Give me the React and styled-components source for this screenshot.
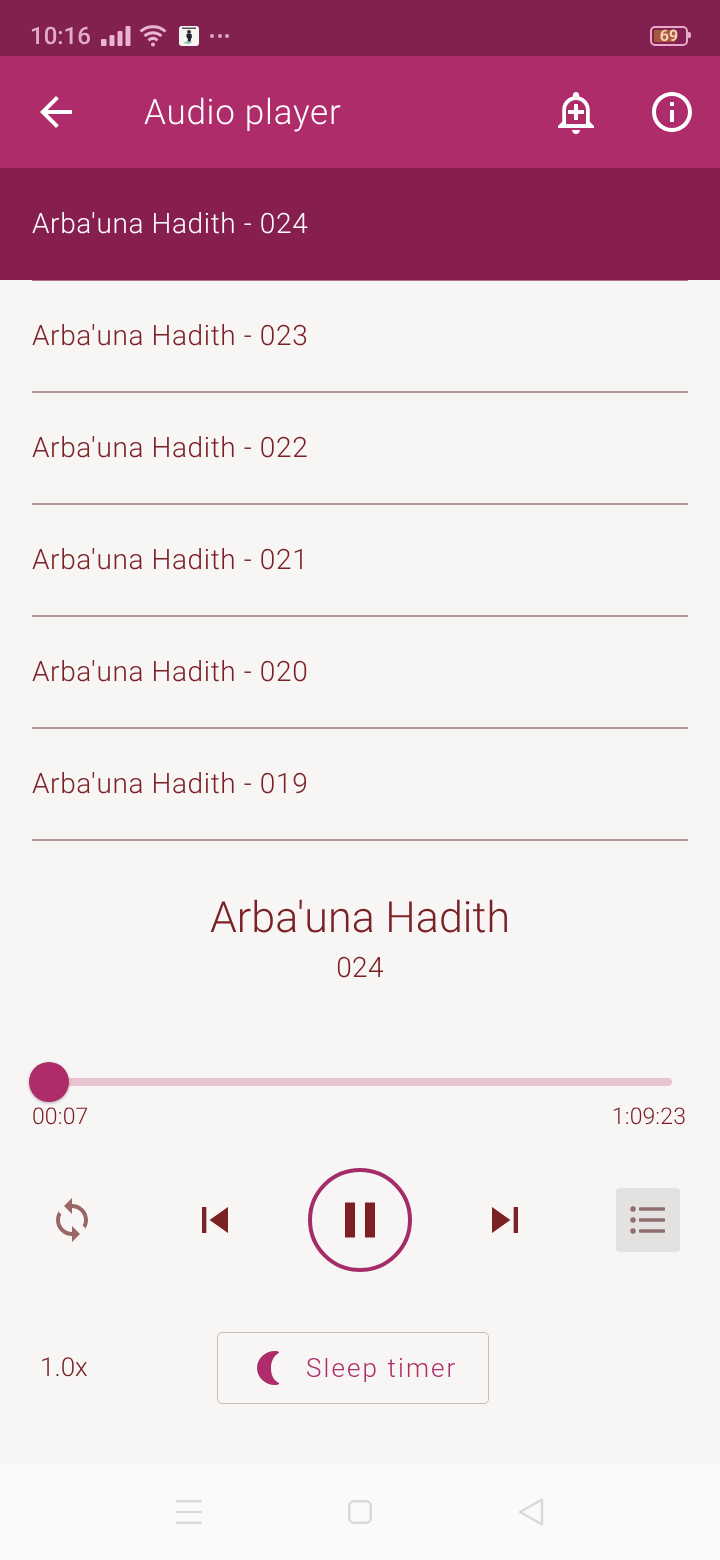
import React from 'react';
import styled, { createGlobalStyle, css } from 'styled-components';

const GlobalStyle = createGlobalStyle`
  html, body { margin: 0; padding: 0; background: #f8f6f5; }
  * { box-sizing: border-box; }
  body { font-family: Roboto, "Liberation Sans", sans-serif; text-rendering: geometricPrecision; }
`;

// own layer, so the text is antialiased in grey as on the phone
const softText = css`
  will-change: opacity;
`;

const Screen = styled.div`
  width: 720px;
  height: 1560px;
  display: flex;
  flex-direction: column;
  background: #f8f6f5;
  overflow: hidden;
`;

//#region status bar
const StatusBar = styled.div`
  height: 56px;
  flex: none;
  display: flex;
  align-items: center;
  padding: 15px 32px 0 30px;
  background: #82214f;
  color: #e8b4d0;
`;
const Clock = styled.span`
  ${softText}
  font-size: 24px;
  font-weight: 500;
  line-height: 1;
  width: 61px;
  opacity: 0.95;
`;
const Dots = styled.span`
  margin-left: 11px;
  display: flex;
  gap: 3.5px;
  i { width: 4px; height: 4px; border-radius: 50%; background: #dba6c4; display: block; }
`;
const Battery = styled.div`
  margin-left: auto;
  position: relative;
  width: 38px;
  height: 20px;
  border: 2px solid #e8a8cc;
  border-radius: 5px;
  background: linear-gradient(to right, #a8583f 0 69%, transparent 69%);
  background-clip: content-box;
  padding: 2px;
  &::after {
    content: '';
    position: absolute;
    right: -5px;
    top: 4px;
    width: 3px;
    height: 6px;
    border-radius: 0 2px 2px 0;
    background: #e8a8cc;
  }
`;
const BatteryLevel = styled.span`
  ${softText}
  display: flex;
  height: 100%;
  align-items: center;
  justify-content: center;
  font-size: 16px;
  font-weight: 700;
  color: #f6d3b4;
`;
//#endregion

//#region app bar
const AppBar = styled.header`
  height: 112px;
  flex: none;
  display: flex;
  align-items: center;
  padding: 0 24px 0 32px;
  background: #ae2c6a;
  color: #fff;
`;
const Title = styled.h1`
  ${softText}
  margin: 0 0 0 64px;
  font-size: 35px;
  font-weight: 300;
  letter-spacing: 0.75px;
  color: #fff;
  flex: 1;
`;
const BarAction = styled.button`
  width: 48px;
  height: 48px;
  padding: 0;
  border: 0;
  background: none;
  color: #fff;
  display: flex;
  align-items: center;
  justify-content: center;
  margin-left: ${({ $gap }) => $gap || 0}px;
`;
//#endregion

//#region track list
const TrackList = styled.ul`
  list-style: none;
  margin: 0;
  padding: 0;
  flex: none;
`;
const Track = styled.li`
  height: 112px;
  padding: 0 32px;
  background: ${({ $active }) => ($active ? '#861f50' : 'transparent')};
`;
const TrackLabel = styled.div`
  ${softText}
  height: 112px;
  padding-bottom: 2px;
  display: flex;
  align-items: center;
  font-size: 28px;
  font-weight: 300;
  letter-spacing: 0.62px;
  color: ${({ $active }) => ($active ? '#fff' : '#7b2126')};
  box-shadow: ${({ $active }) =>
    $active ? '0 1px 0 #b0718a' : 'inset 0 -1px 0 #b29593, 0 1px 0 #b29593'};
`;
//#endregion

//#region now playing
const NowPlaying = styled.div`
  ${softText}
  padding-top: 52px;
  text-align: center;
  color: #7b2126;
  font-weight: 300;
`;
const AlbumName = styled.div`
  font-size: 43px;
  line-height: 52px;
  letter-spacing: 0.05px;
`;
const Episode = styled.div`
  font-size: 28px;
  line-height: 34px;
  margin-top: 7px;
  letter-spacing: 0.3px;
`;
const Seek = styled.div`
  margin-top: 93px;
  padding: 0 48px 0 29px;
`;
const Rail = styled.div`
  position: relative;
  height: 8px;
  border-radius: 0 4px 4px 0;
  background: #e8c3d2;
  margin-left: 2px;
`;
const Thumb = styled.div`
  position: absolute;
  left: -2px;
  top: -16px;
  width: 40px;
  height: 40px;
  border-radius: 50%;
  background: #ae2c6a;
  box-shadow: 0 1px 3px rgba(0, 0, 0, 0.3);
`;
const Times = styled.div`
  ${softText}
  display: flex;
  justify-content: space-between;
  padding: 0 34px 0 32px;
  margin-top: 17px;
  font-size: 23px;
  line-height: 28px;
  font-weight: 300;
  letter-spacing: 0.1px;
  color: #7b2126;
`;
const Controls = styled.div`
  margin-top: 37px;
  padding: 0 40px;
  height: 104px;
  display: flex;
  align-items: center;
  justify-content: space-between;
`;
const Transport = styled.div`
  display: flex;
  align-items: center;
  gap: 67px;
`;
const IconButton = styled.button`
  width: ${({ $size }) => $size}px;
  height: ${({ $size }) => $size}px;
  padding: 0;
  border: 0;
  background: ${({ $on }) => ($on ? '#e3e2e1' : 'none')};
  border-radius: 4px;
  color: ${({ $muted }) => ($muted ? '#9a6666' : '#7b2126')};
  display: flex;
  align-items: center;
  justify-content: center;
`;
const PauseButton = styled.button`
  width: 104px;
  height: 104px;
  padding: 0;
  border: 4px solid #a42c68;
  border-radius: 50%;
  background: none;
  color: #7b2126;
  display: flex;
  align-items: center;
  justify-content: center;
`;
const BottomRow = styled.div`
  margin-top: 60px;
  padding-left: 40px;
  display: grid;
  grid-template-columns: 177px 272px;
  align-items: center;
`;
const Speed = styled.span`
  ${softText}
  font-size: 26px;
  font-weight: 300;
  color: #7b2126;
`;
const SleepButton = styled.button`
  height: 72px;
  border: 1px solid #ccb8ba;
  border-radius: 5px;
  background: none;
  display: flex;
  align-items: center;
  padding: 0 0 0 39px;
  gap: 25px;
`;
const SleepLabel = styled.span`
  ${softText}
  font-family: Roboto, "Liberation Sans", sans-serif;
  font-size: 26px;
  font-weight: 300;
  letter-spacing: 2.1px;
  color: #ae2c6a;
`;
//#endregion

//#region nav bar
const NavBar = styled.nav`
  margin-top: auto;
  height: 96px;
  flex: none;
  background: #fafafa;
  display: flex;
  align-items: center;
  justify-content: center;
  gap: 146.5px;
  color: #d9d9d9;
`;
//#endregion

const Svg = ({ size = 24, children }) => (
  <svg width={size} height={size} viewBox="0 0 24 24" fill="currentColor">{children}</svg>
);

const SignalIcon = () => (
  <svg width="30" height="22" viewBox="0 0 30 22" fill="#e8b4d0" style={{ marginLeft: 10 }}>
    <rect x="0" y="14" width="5.500" height="7" rx="1" />
    <rect x="8.500" y="10" width="5" height="11" rx="1" />
    <rect x="16.500" y="6" width="5" height="15" rx="1" />
    <rect x="24.500" y="1" width="5" height="20" rx="1" />
  </svg>
);

const WifiIcon = () => (
  <svg width="28" height="23" viewBox="0 0 28 23" fill="none" stroke="#e8b4d0" strokeWidth="3" style={{ marginLeft: 8 }}>
    <path d="M1.500 7.500C8.500 1 19.500 1 26.500 7.500" />
    <path d="M5.500 12C10.500 7.500 17.500 7.500 22.500 12" />
    <path d="M9.500 16.300C12.500 13.800 15.500 13.800 18.500 16.300" />
    <circle cx="14" cy="20.500" r="2" fill="#e8b4d0" stroke="none" />
  </svg>
);

const AppThumb = () => (
  <svg width="20" height="20" viewBox="0 0 20 20" style={{ marginLeft: 12 }}>
    <rect width="20" height="20" rx="3" fill="#f7f7f2" />
    <rect x="3" y="1.500" width="14" height="1.500" fill="#555" />
    <circle cx="10" cy="6" r="2" fill="#333" />
    <path d="M7.500 8h5l.5 3-1 2-.5 3h-3l.5-3-1.500-2z" fill="#223" />
    <path d="M4 17l5-2 4 1-3 2z" fill="#8fbdb4" />
  </svg>
);

const BackIcon = () => (
  <Svg size={48}><path d="M20 11H7.830l5.590-5.590L12 4l-8 8 8 8 1.410-1.410L7.830 13H20v-2z" /></Svg>
);

const BellIcon = () => (
  <Svg size={48}>
    <path fillRule="evenodd" d="M10.010 21.010c0 1.100.890 1.990 1.990 1.990s1.990-.890 1.990-1.990h-3.980zM18.880 16.820V11c0-3.250-2.250-5.970-5.290-6.690v-.720C13.590 2.710 12.880 2 12 2s-1.590.710-1.590 1.590v.720C7.370 5.030 5.120 7.750 5.120 11v5.820L3 18.940V20h18v-1.060l-2.120-2.120zM17 18H7v-7c0-2.760 2.240-5 5-5s5 2.240 5 5v7z" />
    <path d="M16 13.010h-3v3h-2v-3H8V11h3V8h2v3h3v2.010z" />
  </Svg>
);

const InfoIcon = () => (
  <Svg size={48}><path d="M11 7h2v2h-2zm0 4h2v6h-2zm1-9C6.480 2 2 6.480 2 12s4.480 10 10 10 10-4.480 10-10S17.520 2 12 2zm0 18c-4.410 0-8-3.590-8-8s3.590-8 8-8 8 3.590 8 8-3.590 8-8 8z" /></Svg>
);

const SyncIcon = () => (
  <Svg size={48}><path d="M12 4V1L8 5l4 4V6c3.310 0 6 2.690 6 6 0 1.010-.250 1.970-.700 2.800l1.460 1.460C19.540 15.030 20 13.570 20 12c0-4.420-3.580-8-8-8zm0 14c-3.310 0-6-2.690-6-6 0-1.010.250-1.970.700-2.800L5.240 7.740C4.460 8.970 4 10.430 4 12c0 4.420 3.580 8 8 8v3l4-4-4-4v3z" /></Svg>
);

const PrevIcon = () => <Svg size={52}><path d="M6 6h2v12H6zm3.500 6l8.500 6V6z" /></Svg>;
const NextIcon = () => <Svg size={52}><path d="M6 18l8.500-6L6 6v12zM16 6v12h2V6h-2z" /></Svg>;
const PauseIcon = () => <Svg size={60}><path d="M6 19h4V5H6v14zm8-14v14h4V5h-4z" /></Svg>;

const QueueIcon = () => (
  <svg width="36" height="28" viewBox="0 0 36 28" fill="#8f6e70">
    <circle cx="3" cy="3" r="2.700" />
    <circle cx="3" cy="14" r="2.700" />
    <circle cx="3" cy="25" r="2.700" />
    <rect x="9" y="1.200" width="26" height="3.600" rx="0.800" />
    <rect x="9" y="12.200" width="26" height="3.600" rx="0.800" />
    <rect x="9" y="23.200" width="26" height="3.600" rx="0.800" />
  </svg>
);

const MoonIcon = () => (
  <svg width="24" height="34" viewBox="0 0 24 34" fill="#ae2c6a">
    <path d="M18 0C8 0 0 7.600 0 17s8 17 18 17c2 0 3.500-.500 4-1 .400-.500 0-1-1-1.400C16 28.500 14 23 14 17s2-11.500 7-14.600c1-.600 1.400-1 1-1.400-.500-.500-2-1-4-1z" />
  </svg>
);

const MenuIcon = () => (
  <svg width="26" height="24" viewBox="0 0 26 24" fill="currentColor">
    <rect y="0" width="26" height="2.400" />
    <rect y="10.800" width="26" height="2.400" />
    <rect y="21.600" width="26" height="2.400" />
  </svg>
);
const HomeIcon = () => (
  <svg width="24" height="24" viewBox="0 0 24 24" fill="none" stroke="currentColor" strokeWidth="2.400">
    <rect x="1.200" y="1.200" width="21.600" height="21.600" rx="4.500" />
  </svg>
);
const NavBackIcon = () => (
  <svg width="26" height="28" viewBox="0 0 26 28" fill="none" stroke="currentColor" strokeWidth="2.400" strokeLinejoin="round">
    <path d="M23 1.500v25L1 14z" />
  </svg>
);

const tracks = ['024', '023', '022', '021', '020', '019'];

const App = () => (
  <Screen>
    <GlobalStyle />
    <StatusBar>
      <Clock>10:16</Clock>
      <SignalIcon />
      <WifiIcon />
      <AppThumb />
      <Dots><i /><i /><i /></Dots>
      <Battery><BatteryLevel>69</BatteryLevel></Battery>
    </StatusBar>

    <AppBar>
      <BackIcon />
      <Title>Audio player</Title>
      <BarAction><BellIcon /></BarAction>
      <BarAction $gap={48}><InfoIcon /></BarAction>
    </AppBar>

    <TrackList>
      {tracks.map((n, i) => (
        <Track key={n} $active={i === 0}>
          <TrackLabel $active={i === 0}>Arba'una Hadith - {n}</TrackLabel>
        </Track>
      ))}
    </TrackList>

    <NowPlaying>
      <AlbumName>Arba'una Hadith</AlbumName>
      <Episode>024</Episode>
    </NowPlaying>

    <Seek>
      <Rail><Thumb /></Rail>
    </Seek>
    <Times>
      <span>00:07</span>
      <span>1:09:23</span>
    </Times>

    <Controls>
      <IconButton $size={64} $muted><SyncIcon /></IconButton>
      <Transport>
        <IconButton $size={52}><PrevIcon /></IconButton>
        <PauseButton><PauseIcon /></PauseButton>
        <IconButton $size={52}><NextIcon /></IconButton>
      </Transport>
      <IconButton $size={64} $on><QueueIcon /></IconButton>
    </Controls>

    <BottomRow>
      <Speed>1.0x</Speed>
      <SleepButton><MoonIcon /><SleepLabel>Sleep timer</SleepLabel></SleepButton>
    </BottomRow>

    <NavBar>
      <MenuIcon />
      <HomeIcon />
      <NavBackIcon />
    </NavBar>
  </Screen>
);

export default App;
